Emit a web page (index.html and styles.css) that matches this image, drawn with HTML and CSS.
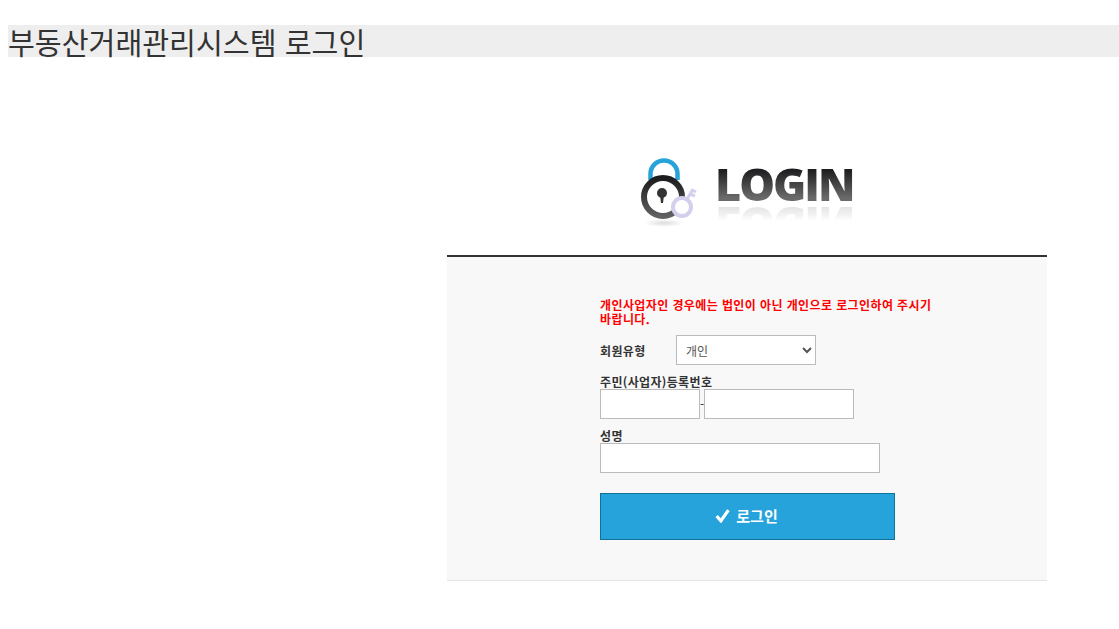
FILE: index.html
```html
<!DOCTYPE html>
<html lang="ko">
<head>
    <meta charset="UTF-8">
    <meta name="viewport" content="width=device-width, initial-scale=1.0">
    <title>부동산거래관리시스템 로그인</title>
    <link rel="stylesheet" href="styles.css">
</head>
<body>

<h1 class="page-title">부동산거래관리시스템 로그인</h1>

<div class="login-wrap">
    <div class="login-logo">
        <svg class="lock-icon" width="60" height="72" viewBox="0 0 60 72">
            <defs>
                <linearGradient id="ring" x1="0" y1="0" x2="0" y2="1">
                    <stop offset="0" stop-color="#1c1c1e"/>
                    <stop offset="1" stop-color="#606062"/>
                </linearGradient>
                <radialGradient id="shadow">
                    <stop offset="0" stop-color="#ddd"/>
                    <stop offset="1" stop-color="#fff"/>
                </radialGradient>
            </defs>
            <ellipse cx="24" cy="67" rx="20" ry="4" fill="url(#shadow)"/>
            <path d="M10.5 24V18A13.5 13.5 0 0 1 37.5 18V24" fill="none" stroke="#25a3da" stroke-width="4.5"/>
            <circle cx="23" cy="41" r="19" fill="#fff" stroke="url(#ring)" stroke-width="6"/>
            <circle cx="22" cy="37" r="5" fill="#333"/>
            <path d="M20 39H24L23 47H21Z" fill="#333"/>
            <path d="M46 45L53 33M50 38L55 40M52 34L56 36" fill="none" stroke="#d5cfee" stroke-width="3"/>
            <circle cx="42" cy="51" r="9" fill="#fff" stroke="#d5cfee" stroke-width="4"/>
        </svg>
        <div class="logo-word">
            <span class="logo-text">LOGIN</span>
        </div>
    </div>

    <div class="login-box">
        <form class="login-form">
            <p class="notice">개인사업자인 경우에는 법인이 아닌 개인으로 로그인하여 주시기 바랍니다.</p>

            <div class="type-row">
                <label class="field-label type-label" for="member-type">회원유형</label>
                <select id="member-type" class="member-select">
                    <option>개인</option>
                </select>
            </div>

            <label class="field-label reg-label" for="reg-front">주민(사업자)등록번호</label>
            <div class="reg-row">
                <input id="reg-front" class="text-input reg-front" type="text"><span class="reg-dash">-</span><input class="text-input reg-back" type="password">
            </div>

            <label class="field-label name-label" for="user-name">성명</label>
            <input id="user-name" class="text-input name-input" type="text">

            <button class="login-btn" type="button">
                <svg width="15" height="15" viewBox="0 0 14 14"><path d="M1.5 7.5L5.5 12L12.5 2" fill="none" stroke="#fff" stroke-width="3"/></svg>
                <span>로그인</span>
            </button>
        </form>
    </div>
</div>

</body>
</html>
```

FILE: styles.css
```css
body {
    margin: 8px 0 8px 8px;
    background: #fff;
    color: #333;
    font-family: "Noto Sans CJK KR", "Liberation Sans", sans-serif;
    font-size: 12px;
}

.page-title {
    margin: 17px 0 0;
    height: 32px;
    line-height: 32px;
    background: #eee;
    color: #333;
    font-size: 29.2px;
    font-weight: 400;
    white-space: nowrap;
}

.login-wrap {
    width: 600px;
    margin-left: 439px;
}

.login-logo {
    display: flex;
    align-items: flex-start;
    gap: 15px;
    height: 198px;
    box-sizing: border-box;
    padding: 99px 0 0 193px;
}

.logo-word {
    padding-top: 8px;
}

.logo-text {
    display: block;
    font-family: "Open Sans", sans-serif;
    font-size: 45px;
    font-weight: 800;
    line-height: 40px;
    letter-spacing: -2px;
    background-image: linear-gradient(#1e1e20 15%, #6a6a6a 85%);
    -webkit-background-clip: text;
    background-clip: text;
    color: transparent;
    -webkit-box-reflect: below 0 linear-gradient(transparent 58%, rgba(255, 255, 255, 0.22));
}

.login-box {
    height: 326px;
    box-sizing: border-box;
    padding: 41px 0 0 153px;
    background: #f8f8f8;
    border-top: 2px solid #333;
    border-bottom: 1px solid #e4e4e4;
}

.login-form {
    width: 340px;
}

.notice {
    margin: 0 0 9px;
    color: #f00;
    font-size: 12px;
    font-weight: 700;
    line-height: 14px;
    letter-spacing: 0.4px;
    word-break: keep-all;
}

.type-row {
    display: flex;
    align-items: center;
    margin-bottom: 8px;
}

.field-label {
    display: block;
    font-weight: 700;
    line-height: 16px;
    letter-spacing: 0.35px;
}

.type-label {
    width: 76px;
    padding-top: 1px;
}

.reg-label,
.name-label {
    height: 16px;
    line-height: 18px;
}

.member-select {
    width: 140px;
    height: 30px;
    padding: 0 5px;
    box-sizing: border-box;
    background: #fff;
    border: 1px solid #bbb;
    border-radius: 0;
    color: #555;
    font-family: inherit;
    font-size: 12px;
}

.reg-row {
    display: flex;
    align-items: center;
}

.text-input {
    display: block;
    height: 30px;
    padding: 0;
    box-sizing: border-box;
    background: #fff;
    border: 1px solid #bbb;
    border-radius: 0;
}

.reg-front {
    width: 100px;
}

.reg-dash {
    width: 4px;
    line-height: 12px;
}

.reg-back {
    width: 150px;
}

.name-label {
    margin-top: 8px;
}

.name-input {
    width: 280px;
}

.login-btn {
    display: flex;
    justify-content: center;
    align-items: center;
    gap: 6px;
    width: 295px;
    height: 47px;
    margin-top: 20px;
    padding: 0 2px 2px 0;
    background: #25a3da;
    border: 1px solid #0f719c;
    color: #fff;
    font-family: inherit;
    font-size: 15px;
    font-weight: 700;
    cursor: pointer;
}
```
